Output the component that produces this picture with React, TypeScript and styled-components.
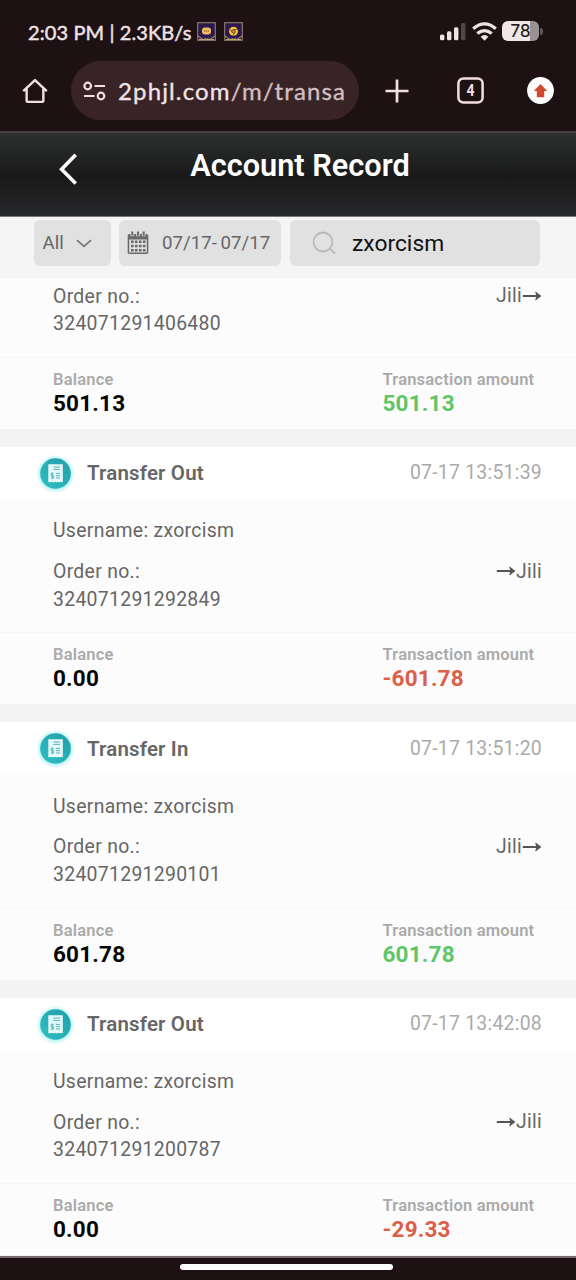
import React from 'react';
import styled, { createGlobalStyle } from 'styled-components';

const GlobalStyle = createGlobalStyle`
  * { box-sizing: border-box; }
  body { margin: 0; background: #1e1113; font-family: Roboto, "Liberation Sans", sans-serif; }
`;

const Screen = styled.div`
  width: 576px;
  height: 1280px;
  display: flex;
  flex-direction: column;
  overflow: hidden;
  background: #1e1113;
`;

const StatusBar = styled.div`
  height: 61px;
  padding: 2px 33px 0 28px;
  display: flex;
  align-items: center;
  color: #efe3e5;
`;

const Clock = styled.span`
  font: 400 20px/24px Lato, sans-serif;
  letter-spacing: 0.1px;
  -webkit-text-stroke: 0.45px currentColor;
  width: 168.5px;
  white-space: nowrap;
`;

const Notices = styled.div`
  display: flex;
  gap: 8px;
  flex: 1;
  margin-top: -1px;
`;

const StatusIcons = styled.div`
  display: flex;
  align-items: center;
  gap: 6px;
  margin-top: -1px;
`;

const BrowserBar = styled.div`
  height: 70px;
  padding: 0 22px 0 22px;
  display: flex;
  align-items: flex-start;
`;

const BarIcon = styled.div<{ $w: number; $ml?: number }>`
  width: ${(p) => p.$w}px;
  margin-left: ${(p) => p.$ml ?? 0}px;
  height: 59px;
  display: flex;
  align-items: center;
  justify-content: center;
`;

const AddressPill = styled.div`
  width: 288px;
  height: 59px;
  margin-left: 23px;
  padding-left: 12px;
  border-radius: 30px;
  background: #382427;
  display: flex;
  align-items: center;
`;

const Address = styled.span`
  margin-left: 12px;
  font: 400 24px/32px Lato, sans-serif;
  letter-spacing: 1.13px;
  -webkit-text-stroke: 0.35px currentColor;
  color: #f1e3e5;
  white-space: nowrap;
  em { font-style: normal; color: #d3bec1; }
`;

const TitleBar = styled.header`
  height: 86px;
  border-top: 2px solid #463d3f;
  border-bottom: 1px solid #77777a;
  background: linear-gradient(#2e302f 0%, #191919 52%, #27282a 100%);
  display: grid;
  grid-template-columns: 136px 328px 112px;
`;

const Back = styled.div`
  padding: 20px 0 0 57px;
`;

const Title = styled.h1`
  margin: 0;
  padding-top: 14px;
  text-align: center;
  font-size: 30.7px;
  line-height: 37px;
  font-weight: 600;
  color: #fff;
  white-space: nowrap;
`;

const Filters = styled.div`
  height: 61px;
  padding: 3px 0 0 34px;
  display: flex;
  background: #f5f5f5;
  color: #666;
`;

const Field = styled.div<{ $w: number; $ml?: number; $pl: number }>`
  width: ${(p) => p.$w}px;
  height: 46px;
  margin-left: ${(p) => p.$ml ?? 0}px;
  padding-left: ${(p) => p.$pl}px;
  border-radius: 6px;
  background: #e1e1e1;
  display: flex;
  align-items: center;
  white-space: nowrap;
`;

const AllText = styled.span`
  width: 33px;
  font-size: 18.6px;
  line-height: 24px;
  margin-bottom: 1px;
`;

const DateText = styled.span`
  margin: 0 0 1px 13px;
  font-size: 18.7px;
  line-height: 24px;
  word-spacing: -1px;
`;

const SearchText = styled.span`
  margin-left: 16px;
  font-size: 22.8px;
  color: #111;
`;

const List = styled.main`
  flex: 1;
  min-height: 0;
  overflow: hidden;
  display: flex;
  flex-direction: column;
  gap: 18px;
  background: #f4f4f4;
`;

const Card = styled.section`
  flex: none;
  background: #fcfcfc;
  color: #666;
`;

const CardHead = styled.div`
  height: 52px;
  padding: 1px 34px 0 35px;
  display: flex;
  align-items: center;
  background: #fff;
`;

const Kind = styled.h2`
  margin: 0 0 0 11px;
  flex: 1;
  font-size: 20.5px;
  letter-spacing: 0.15px;
  font-weight: 600;
  line-height: 28px;
  color: #666;
`;

const Stamp = styled.time`
  font-size: 19.4px;
  line-height: 28px;
  letter-spacing: 0.25px;
  color: #aaa;
`;

const User = styled.div`
  height: 46px;
  padding: 18.5px 53px 0;
  font-size: 19.4px;
  line-height: 28px;
  letter-spacing: 0.3px;
`;

const Order = styled.div<{ $first?: boolean }>`
  height: ${(p) => (p.$first ? 79.67 : 88)}px;
  padding: ${(p) => (p.$first ? 4.7 : 13)}px 34px 0 53px;
  display: flex;
  justify-content: space-between;
  font-size: 19.4px;
  line-height: 27.6px;
  letter-spacing: 0.3px;
  border-bottom: 1px solid #f5f5f5;
`;

const Route = styled.span`
  height: 27px;
  display: flex;
  align-items: center;
`;

const Totals = styled.div`
  height: 71.33px;
  padding: 11.2px 0 0 53px;
  display: grid;
  grid-template-columns: 329.5px 1fr;
`;

const Label = styled.div`
  font-size: 16.5px;
  line-height: 22px;
  letter-spacing: 0.2px;
  font-weight: 600;
  color: #aaa;
`;

const Amount = styled.div<{ $tone?: 'in' | 'out' }>`
  font-size: 22.5px;
  line-height: 25px;
  letter-spacing: 0.2px;
  font-weight: 700;
  color: ${(p) => (p.$tone === 'in' ? '#5fc668' : p.$tone === 'out' ? '#dc6049' : '#050505')};
`;

const NavBar = styled.footer`
  height: 24px;
  border-top: 2px solid #77696d;
  padding: 6px 4px 0 0;
  display: flex;
  justify-content: center;
`;

const Handle = styled.div`
  width: 213px;
  height: 6px;
  border-radius: 3px;
  background: #fff;
`;

const Badge = ({ chat }: { chat?: boolean }) => (
  <svg width="19" height="19" viewBox="0 0 19 19">
    <rect x="0.7" y="0.7" width="17.6" height="17.6" fill="#2c184d" stroke="#92816c" strokeWidth="1.1" />
    <path d="M1 14l3 2 2 1.4h7L15 16l3-2M2 17.5h15M7.5 16l2 1.5 2-1.5" fill="none" stroke="#b9a273" strokeWidth="1" />
    {chat ? (
      <>
        <rect x="5" y="5.5" width="9" height="7" rx="3" fill="#f0bd60" />
        <path d="M7 9h5" stroke="#764924" strokeWidth="1.2" strokeDasharray="1.2 0.7" />
      </>
    ) : (
      <>
        <circle cx="9.5" cy="9.3" r="4.5" fill="#efc33c" />
        <circle cx="9.5" cy="9.3" r="1.7" fill="#d69b21" stroke="#5c3b23" strokeWidth="0.8" />
        <path d="M9.5 7.5h4M8 10l-2-3M11 10l-2 3.6" stroke="#5c3b23" strokeWidth="0.7" />
      </>
    )}
  </svg>
);

const Signal = () => (
  <svg width="26" height="19" viewBox="0 0 26 19" fill="#efe3e5">
    <rect x="0" y="12.5" width="4.4" height="5.8" rx="1.5" />
    <rect x="7" y="9.2" width="4.4" height="9.1" rx="1.5" />
    <rect x="14" y="5.2" width="4.4" height="13.1" rx="1.5" />
    <rect x="21" y="1" width="4.4" height="17.3" rx="1.5" fill="#534749" />
  </svg>
);

const Wifi = () => (
  <svg width="25" height="19" viewBox="0 0 25 19" fill="none" stroke="#efe3e5" strokeWidth="3.3">
    <path d="M1.2 6.8Q12.5 -3 23.8 6.8" />
    <path d="M5.3 11.6Q12.5 5.6 19.7 11.6" />
    <path d="M8.6 14.8Q12.5 11.2 16.4 14.8L12.5 18.8z" fill="#efe3e5" stroke="none" />
  </svg>
);

const Battery = styled.div`
  width: 37px;
  height: 20px;
  margin-left: -1px;
  border-radius: 6px;
  background: linear-gradient(90deg, #efe7e8 77%, #9a9193 77%);
  font: 400 17px/21px Inter, sans-serif;
  text-align: center;
  color: #231719;
  -webkit-text-stroke: 0.2px currentColor;
`;

const BatteryTip = styled.div`
  width: 3px;
  height: 7px;
  margin-left: -5px;
  border-radius: 0 3px 3px 0;
  background: #625759;
`;

const Receipt = () => (
  <svg width="41" height="41" viewBox="0 0 41 41">
    <defs>
      <linearGradient id="teal" x1="0" y1="1" x2="1" y2="0">
        <stop offset="0" stopColor="#2cc0c4" />
        <stop offset="1" stopColor="#239da8" />
      </linearGradient>
      <radialGradient id="glow">
        <stop offset="0.7" stopColor="#7ee9ec" stopOpacity="0.7" />
        <stop offset="1" stopColor="#7ee9ec" stopOpacity="0" />
      </radialGradient>
    </defs>
    <circle cx="20.5" cy="21" r="19.5" fill="url(#glow)" />
    <circle cx="20.5" cy="20.5" r="15.3" fill="url(#teal)" />
    <path d="M13.300 11.300h14.500v18.200l-1.500-.7-1.500.7-1.500-.7-1.500.7-1.500-.7-1.500.7-1.500-.7-1.500.7-1.200-.7-1.300.7z" fill="#e7f8f8" />
    <path d="M18.5 14h6.500M18.5 16.4h6.500M20.9 20.4h4.200M20.9 22.7h4.200M20.9 25h4.200" stroke="#4fb4bb" strokeWidth="1" />
    <path d="M18.6 20.5h-2.500v2.200h2.400v2.300h-2.600M17.3 19.3v6.800" fill="none" stroke="#4fb4bb" strokeWidth="0.9" />
  </svg>
);

const ArrowRight = () => (
  <svg width="20" height="12" viewBox="0 0 20 12">
    <path d="M0.8 6H16" stroke="#555" strokeWidth="2" />
    <path d="M13.7 2.1L18.9 6l-5.2 3.900L15 6z" fill="#555" stroke="#555" strokeWidth="0.9" />
  </svg>
);

type Rec = { kind?: 'In' | 'Out'; time?: string; no: string; balance: string; amount: string; tone: 'in' | 'out' };

const records: Rec[] = [
  { no: '324071291406480', balance: '501.13', amount: '501.13', tone: 'in' },
  { kind: 'Out', time: '07-17 13:51:39', no: '324071291292849', balance: '0.00', amount: '-601.78', tone: 'out' },
  { kind: 'In', time: '07-17 13:51:20', no: '324071291290101', balance: '601.78', amount: '601.78', tone: 'in' },
  { kind: 'Out', time: '07-17 13:42:08', no: '324071291200787', balance: '0.00', amount: '-29.33', tone: 'out' },
];

const RecordCard = ({ r }: { r: Rec }) => (
  <Card>
    {r.kind && (
      <>
        <CardHead>
          <Receipt />
          <Kind>Transfer {r.kind}</Kind>
          <Stamp>{r.time}</Stamp>
        </CardHead>
        <User>Username: zxorcism</User>
      </>
    )}
    <Order $first={!r.kind}>
      <div>
        Order no.:
        <br />
        {r.no}
      </div>
      <Route>
        {r.tone === 'out' && <ArrowRight />}
        Jili
        {r.tone === 'in' && <ArrowRight />}
      </Route>
    </Order>
    <Totals>
      <div>
        <Label>Balance</Label>
        <Amount>{r.balance}</Amount>
      </div>
      <div>
        <Label>Transaction amount</Label>
        <Amount $tone={r.tone}>{r.amount}</Amount>
      </div>
    </Totals>
  </Card>
);

export default function App() {
  return (
    <Screen>
      <GlobalStyle />
      <StatusBar>
        <Clock>2:03 PM | 2.3KB/s</Clock>
        <Notices>
          <Badge chat />
          <Badge />
        </Notices>
        <StatusIcons>
          <Signal />
          <Wifi />
          <Battery>78</Battery>
          <BatteryTip />
        </StatusIcons>
      </StatusBar>
      <BrowserBar>
        <BarIcon $w={26}>
          <svg width="28" height="28" viewBox="0 0 28 28" fill="none" stroke="#f3dfe2" strokeWidth="2.6" strokeLinejoin="round">
            <path d="M1.3 14.2L14 2.2l12.7 12M5 11.5v13.2q0 1 1 1h16q1 0 1-1V11.5" />
          </svg>
        </BarIcon>
        <AddressPill>
          <svg width="23" height="20" viewBox="0 0 23 20" fill="none" stroke="#f1dfe2" strokeWidth="2.2">
            <circle cx="4.7" cy="5" r="3.3" />
            <path d="M11.5 5H22M1 15h10.5" />
            <circle cx="18" cy="15" r="3.3" />
          </svg>
          <Address>
            2phjl.com<em>/m/transa</em>
          </Address>
        </AddressPill>
        <BarIcon $w={26} $ml={25}>
          <svg width="24" height="24" viewBox="0 0 24 24" stroke="#f3dfe2" strokeWidth="2.7">
            <path d="M12 0.5v23M0.5 12h23" />
          </svg>
        </BarIcon>
        <BarIcon $w={28} $ml={46}>
          <svg width="27" height="27" viewBox="0 0 27 27">
            <rect x="1.4" y="1.4" width="24.2" height="24.2" rx="5" fill="none" stroke="#f3dfe2" strokeWidth="2.5" />
            <text x="13.5" y="19.2" textAnchor="middle" fontFamily="Roboto" fontWeight="700" fontSize="16" textLength="8" lengthAdjust="spacingAndGlyphs" fill="#f3dfe2">4</text>
          </svg>
        </BarIcon>
        <BarIcon $w={27} $ml={43}>
          <svg width="27" height="27" viewBox="0 0 27 27">
            <circle cx="13.5" cy="13.5" r="13.4" fill="#fff" />
            <path d="M13.5 7L20.2 14h-3v6.2H9.8V14h-3z" fill="#d04a30" />
          </svg>
        </BarIcon>
      </BrowserBar>
      <TitleBar>
        <Back>
          <svg width="22" height="32" viewBox="0 0 22 32" fill="none" stroke="#fff" strokeWidth="3.6">
            <path d="M18.7 1.8L4.6 16.2l14.1 14.3" />
          </svg>
        </Back>
        <Title>Account Record</Title>
      </TitleBar>
      <Filters>
        <Field $w={77} $pl={8.5}>
          <AllText>All</AllText>
          <svg width="16" height="12" viewBox="0 0 16 12" fill="none" stroke="#777" strokeWidth="1.7">
            <path d="M1 3.2l7 6.2 7-6.2" />
          </svg>
        </Field>
        <Field $w={162} $ml={8} $pl={8}>
          <svg width="22" height="24" viewBox="0 0 22 24">
            <path d="M2.5 3h17q1.8 0 1.8 1.8v16.4q0 1.8-1.8 1.8h-17Q0.7 23 0.7 21.2V4.8Q0.7 3 2.5 3z" fill="#686868" />
            <path d="M5.3 0.8v4.5M11 0.8v4.5M16.7 0.8v4.5" stroke="#e1e1e1" strokeWidth="3.6" />
            <path d="M5.3 0.5v4.3M11 0.5v4.3M16.7 0.5v4.3" stroke="#686868" strokeWidth="2" />
            <rect x="2.2" y="8.5" width="17.6" height="13" fill="#e1e1e1" />
            <path d="M4 10.7h14.5M4 15h14.5M4 19.2h14.5" stroke="#686868" strokeWidth="2.6" strokeDasharray="2.6 1.35" />
          </svg>
          <DateText>07/17- 07/17</DateText>
        </Field>
        <Field $w={250} $ml={9} $pl={22}>
          <svg width="24" height="24" viewBox="0 0 24 24" fill="none" stroke="#b9b9b9" strokeWidth="1.8">
            <circle cx="11" cy="11" r="9.5" />
            <path d="M17.8 17.8L23 22.5" />
          </svg>
          <SearchText>zxorcism</SearchText>
        </Field>
      </Filters>
      <List>
        {records.map((r) => (
          <RecordCard key={r.no} r={r} />
        ))}
      </List>
      <NavBar>
        <Handle />
      </NavBar>
    </Screen>
  );
}
